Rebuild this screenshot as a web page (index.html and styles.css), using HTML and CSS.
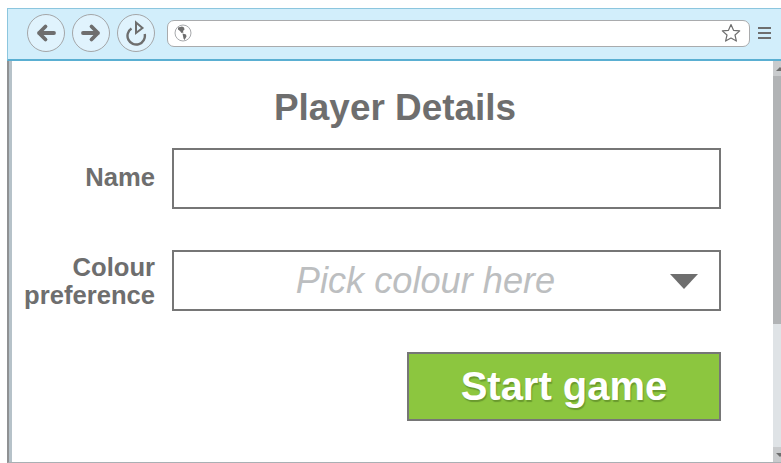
FILE: index.html
```html
<!DOCTYPE html>
<html lang="en">
<head>
<meta charset="utf-8">
<title>Player Details</title>
<link rel="stylesheet" href="styles.css">
</head>
<body>
<div class="window">
  <header class="toolbar">
    <button class="nav-btn" type="button" aria-label="Back">
      <svg viewBox="0 0 24 24" width="24" height="24"><path d="M20 12H5M11.500 5.500L5 12l6.500 6.500" fill="none" stroke="#6e6e6e" stroke-width="3.800" stroke-linecap="round" stroke-linejoin="round"/></svg>
    </button>
    <button class="nav-btn" type="button" aria-label="Forward">
      <svg viewBox="0 0 24 24" width="24" height="24"><path d="M4 12h15M12.500 5.500L19 12l-6.500 6.500" fill="none" stroke="#6e6e6e" stroke-width="3.800" stroke-linecap="round" stroke-linejoin="round"/></svg>
    </button>
    <button class="nav-btn" type="button" aria-label="Reload">
      <svg viewBox="0 0 26 26" width="26" height="26"><path d="M8.500 8.500A8.700 8.700 0 1 0 21.700 14" fill="none" stroke="#6e6e6e" stroke-width="2.400"/><path d="M13 2.500l6.500 5.500L13 13z" fill="#e0f3fd" stroke="#6e6e6e" stroke-width="2" stroke-linejoin="miter"/></svg>
    </button>
    <div class="address">
      <svg class="globe" viewBox="0 0 18 18" width="18" height="18"><circle cx="9" cy="9" r="8" fill="#fff" stroke="#a7a9ac" stroke-width="1"/><path d="M4 3.500l4-1 2 1 .5 2-1.500 1.500.5 1.500-2 .5-1.500-2-2-1.500zM8.500 9.500l3.500 1 .5 2-2 3.500-1-1.500z" fill="#6e6e6e"/></svg>
      <svg class="star" viewBox="0 0 20 20" width="20" height="20"><path d="M10 1.500l2.500 5.800 6.200.6-4.700 4.100 1.400 6.100L10 15l-5.400 3.100L6 12 1.300 7.900l6.200-.6z" fill="#fff" stroke="#6e6e6e" stroke-width="1.200" stroke-linejoin="round"/></svg>
    </div>
    <div class="menu" aria-label="Menu"><span></span><span></span><span></span></div>
  </header>
  <div class="viewport">
    <main class="page">
      <h1 class="title">Player Details</h1>
      <form class="form">
        <div class="row row-name">
          <label class="label">Name</label>
          <div class="field"></div>
        </div>
        <div class="row row-colour">
          <label class="label">Colour<br>preference</label>
          <div class="field select">
            <span class="placeholder">Pick colour here</span>
            <span class="caret"></span>
          </div>
        </div>
        <div class="actions">
          <button class="start" type="button">Start game</button>
        </div>
      </form>
    </main>
    <aside class="scrollbar">
      <span class="arrow arrow-up"></span>
      <span class="thumb"></span>
      <span class="track"></span>
      <span class="arrow arrow-down"></span>
    </aside>
  </div>
</div>
</body>
</html>
```

FILE: styles.css
```css
html, body {
  margin: 0;
  height: 463px;
  overflow: hidden;
  background: #fff;
  font-family: "Liberation Sans", Arial, sans-serif;
}

.window {
  box-sizing: border-box;
  height: 463px;
  padding: 8px 0 0 7px;
  display: flex;
  flex-direction: column;
}

/* Browser chrome */
.toolbar {
  box-sizing: border-box;
  height: 53px;
  flex: none;
  display: flex;
  align-items: center;
  padding: 0 10px 2px 19px;
  background: #d2eefb;
  border-top: 1px solid #8cc6de;
  border-left: 1px solid #8cc6de;
  border-bottom: 2px solid #5aafd2;
}

.nav-btn {
  box-sizing: border-box;
  width: 38px;
  height: 38px;
  margin-right: 7px;
  padding: 0;
  display: flex;
  align-items: center;
  justify-content: center;
  border: 1px solid #a4a6a8;
  border-radius: 50%;
  background: #e0f3fd;
}

.address {
  box-sizing: border-box;
  flex: 1;
  height: 27px;
  margin-left: 5px;
  padding: 0 8px 0 6px;
  display: flex;
  align-items: center;
  justify-content: space-between;
  background: #fff;
  border: 1px solid #a9abad;
  border-radius: 7px;
}

.globe { flex: none; }
.star { flex: none; }

.menu {
  width: 13px;
  margin: 0 0 0 8px;
  display: flex;
  flex-direction: column;
  gap: 3px;
}

.menu span {
  height: 2px;
  background: #6e6e6e;
}

/* Content area below the chrome */
.viewport {
  flex: 1;
  min-height: 0;
  display: flex;
  border-left: 2px solid #8f9193;
  border-bottom: 1px solid #a9b0b4;
}

.page {
  box-sizing: border-box;
  flex: 1;
  border-left: 3px solid #b6c2c9;
}

.title {
  margin: 26px 0 0 0;
  padding-left: 5px;
  height: 41px;
  line-height: 41px;
  text-align: center;
  font-size: 36.900px;
  font-weight: 700;
  color: #6e6e6e;
}

.form {
  margin-top: 20px;
  padding-right: 52px;
}

.row {
  display: flex;
  align-items: center;
  gap: 17px;
}

.row-name .label {
  padding-bottom: 3px;
}

.row-colour {
  margin-top: 41px;
}

.label {
  width: 143px;
  flex: none;
  text-align: right;
  font-size: 25.600px;
  line-height: 28px;
  font-weight: 700;
  color: #6e6e6e;
}

.field {
  box-sizing: border-box;
  flex: 1;
  height: 61px;
  background: #fff;
  border: 2px solid #767676;
}

.select {
  position: relative;
  display: flex;
  align-items: center;
  justify-content: center;
  padding-right: 42px;
}

.placeholder {
  font-size: 36.200px;
  font-style: italic;
  color: #bcbec0;
}

.caret {
  position: absolute;
  right: 21px;
  top: 22px;
  width: 0;
  height: 0;
  border-left: 14px solid transparent;
  border-right: 14px solid transparent;
  border-top: 15px solid #6e6e6e;
}

.actions {
  margin-top: 41px;
  display: flex;
  justify-content: flex-end;
}

.start {
  box-sizing: border-box;
  width: 314px;
  height: 69px;
  padding: 0;
  background: #8cc63f;
  border: 2px solid #767676;
  font-family: inherit;
  font-size: 40px;
  font-weight: 700;
  color: #fff;
  text-shadow: 1px 2px 1px #6a9a2e;
}

/* Scrollbar on the right edge */
.scrollbar {
  width: 8px;
  flex: none;
  display: flex;
  flex-direction: column;
  background: #dfe3e6;
}

.arrow {
  height: 15px;
  flex: none;
  position: relative;
  background: #c9cbcd;
}

.arrow::after {
  content: "";
  position: absolute;
  left: 3px;
  top: 6px;
  border-left: 4px solid transparent;
  border-right: 4px solid transparent;
}

.arrow-up::after { border-bottom: 4px solid #6e6e6e; }
.arrow-down::after { border-top: 4px solid #6e6e6e; }

.thumb {
  height: 248px;
  flex: none;
  background: #b1b3b5;
}

.track {
  flex: 1;
}
```
